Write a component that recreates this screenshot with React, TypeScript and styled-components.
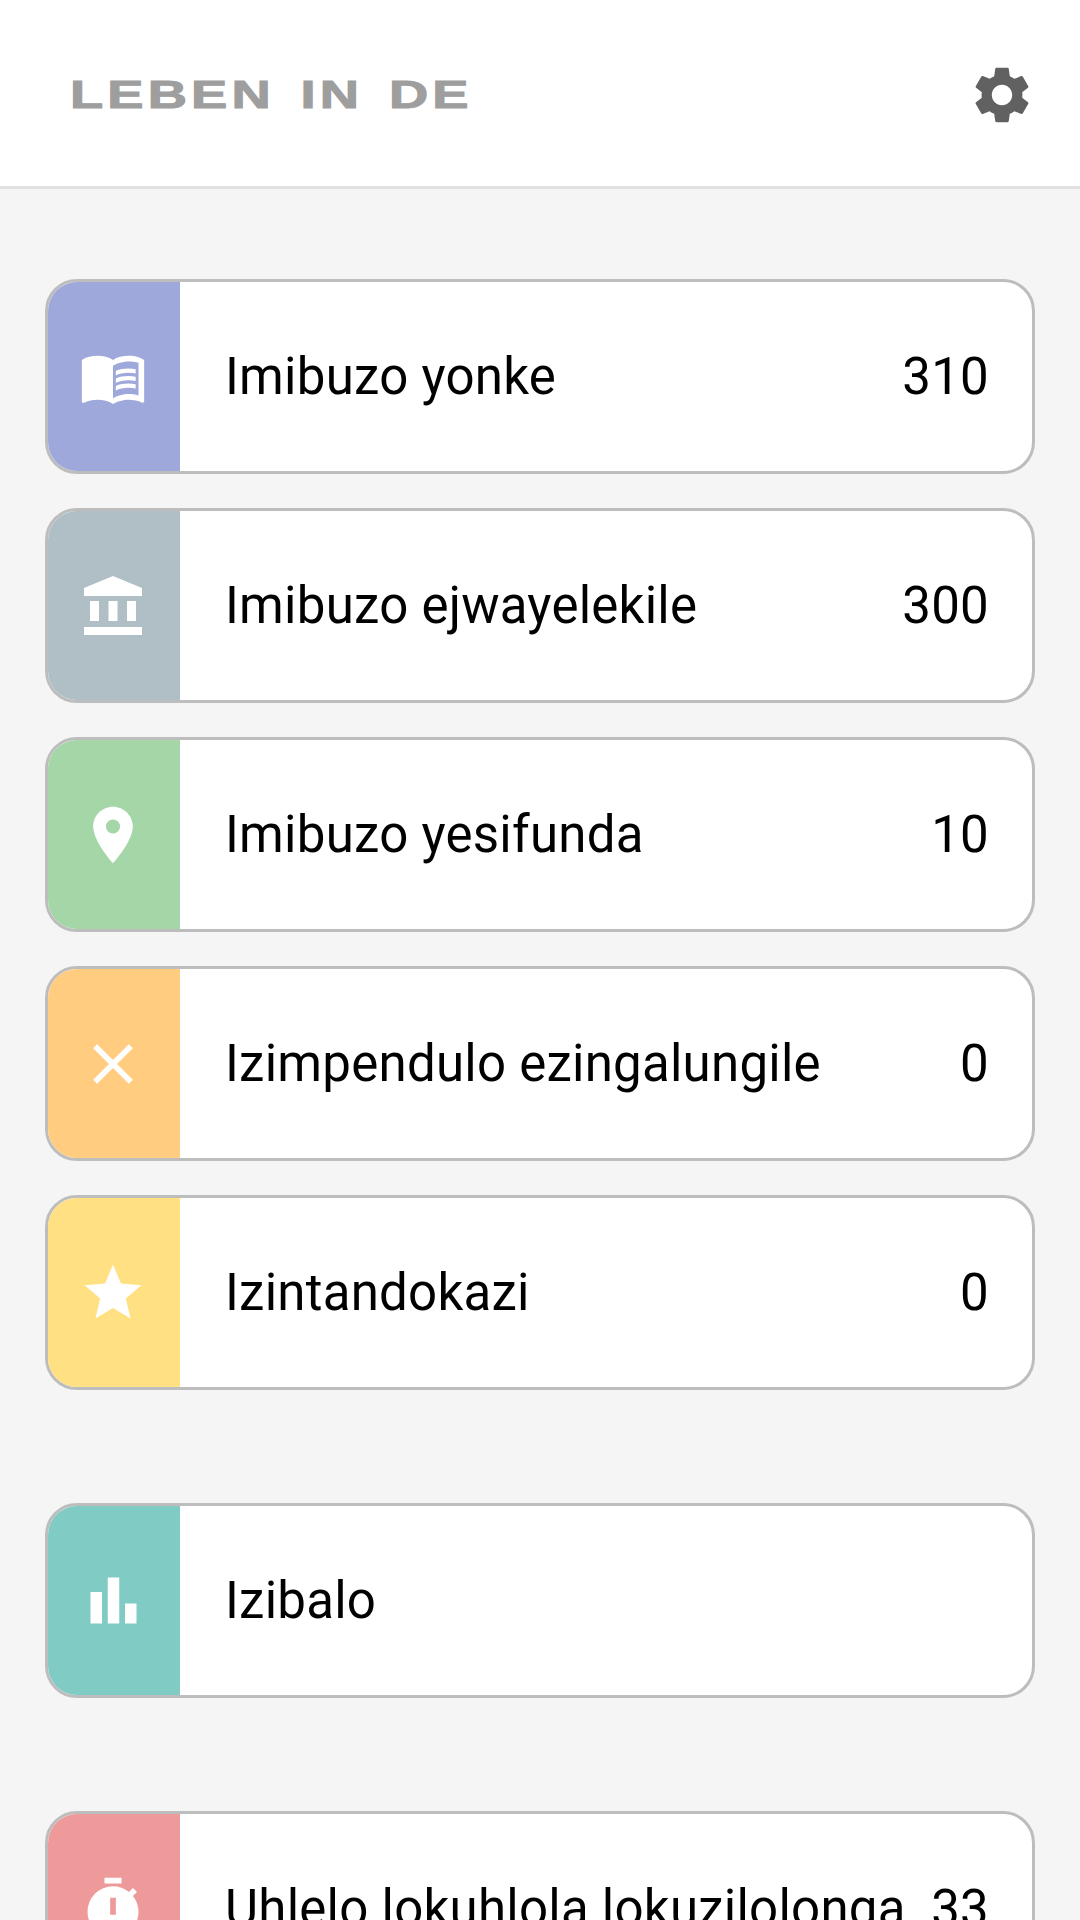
import React from "react";
import styled, { createGlobalStyle } from "styled-components";
import {
  MdBarChart,
  MdClose,
  MdMenuBook,
  MdPlace,
  MdSettings,
  MdStar,
  MdTimer,
} from "react-icons/md";

const GlobalStyle = createGlobalStyle`
  html, body {
    margin: 0;
    padding: 0;
    background: #f5f5f5;
  }

  body {
    font-family: Roboto, "Liberation Sans", sans-serif;
  }
`;

const Screen = styled.div`
  width: 1080px;
  height: 1920px;
  overflow: hidden;
  background: #f5f5f5;
`;

const Header = styled.header`
  box-sizing: border-box;
  height: 189px;
  display: flex;
  align-items: center;
  justify-content: space-between;
  padding: 4px 44px 0 70px;
  background: #fff;
  border-bottom: 3px solid #e0e0e0;
`;

const Logo = styled.div`
  font-family: "Liberation Sans", Arial, sans-serif;
  font-weight: 700;
  font-size: 38px;
  line-height: 38px;
  letter-spacing: 2.9px;
  word-spacing: 4.5px;
  color: #9e9e9e;
  -webkit-text-stroke: 1px #9e9e9e;
  white-space: nowrap;
  transform: scaleX(1.43);
  transform-origin: left center;
`;

const SettingsButton = styled.div`
  display: flex;
  color: #616161;
`;

const Content = styled.main`
  display: flex;
  flex-direction: column;
  gap: 113px;
  padding: 90px 45px 0;
`;

const Group = styled.section`
  display: flex;
  flex-direction: column;
  gap: 34px;
`;

const Card = styled.div`
  box-sizing: border-box;
  height: 195px;
  display: flex;
  overflow: hidden;
  background: #fff;
  border: 3px solid #bdbdbd;
  border-radius: 32px;
`;

const IconPanel = styled.div<{ $color: string }>`
  box-sizing: border-box;
  flex: 0 0 132px;
  display: flex;
  align-items: center;
  justify-content: center;
  padding-right: 2px;
  background: ${(p) => p.$color};
  color: #fff;
`;

const CardBody = styled.div`
  flex: 1;
  display: flex;
  align-items: center;
  justify-content: space-between;
  padding: 0 43px 0 45px;
  font-size: 51px;
  letter-spacing: 0.25px;
  color: #000;
  white-space: nowrap;
`;

function BankIcon() {
  return (
    <svg width="58" height="59" viewBox="0 0 58 59" fill="currentColor">
      <path d="M29 0 L58 12 V20 H0 V12 Z" />
      <rect x="6" y="25" width="9" height="20" />
      <rect x="24.5" y="25" width="9" height="20" />
      <rect x="43" y="25" width="9" height="20" />
      <rect x="0" y="51" width="58" height="8" />
    </svg>
  );
}

type Item = {
  label: string;
  count?: number;
  color: string;
  icon: React.ReactNode;
};

const groups: Item[][] = [
  [
    { label: "Imibuzo yonke", count: 310, color: "#9fa8da", icon: <MdMenuBook size={68} /> },
    { label: "Imibuzo ejwayelekile", count: 300, color: "#b0bec5", icon: <BankIcon /> },
    { label: "Imibuzo yesifunda", count: 10, color: "#a5d6a7", icon: <MdPlace size={68} /> },
    { label: "Izimpendulo ezingalungile", count: 0, color: "#ffcc80", icon: <MdClose size={68} /> },
    { label: "Izintandokazi", count: 0, color: "#ffe082", icon: <MdStar size={68} /> },
  ],
  [{ label: "Izibalo", color: "#80cbc4", icon: <MdBarChart size={69} /> }],
  [{ label: "Uhlelo lokuhlola lokuzilolonga", count: 33, color: "#ef9a9a", icon: <MdTimer size={68} /> }],
];

export default function App() {
  return (
    <Screen>
      <GlobalStyle />
      <Header>
        <Logo>LEBEN IN DE</Logo>
        <SettingsButton>
          <MdSettings size={68} />
        </SettingsButton>
      </Header>
      <Content>
        {groups.map((group, i) => (
          <Group key={i}>
            {group.map((item) => (
              <Card key={item.label}>
                <IconPanel $color={item.color}>{item.icon}</IconPanel>
                <CardBody>
                  <span>{item.label}</span>
                  {item.count !== undefined && <span>{item.count}</span>}
                </CardBody>
              </Card>
            ))}
          </Group>
        ))}
      </Content>
    </Screen>
  );
}
